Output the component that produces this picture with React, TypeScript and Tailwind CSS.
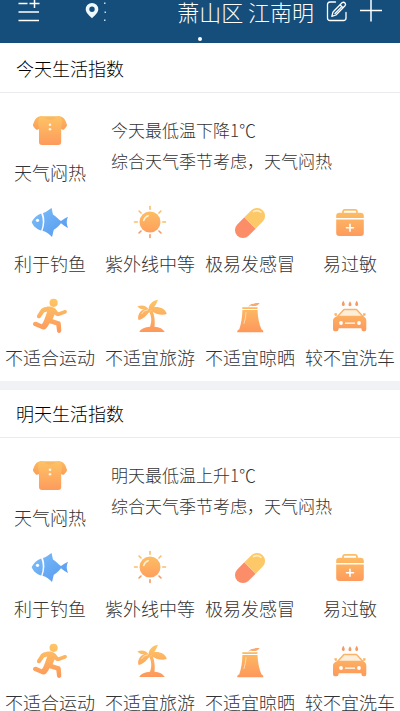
import type { ReactNode } from "react";

type IndexItem = { label: string; icon: ReactNode };

function Art({ children }: { children: ReactNode }) {
  return (
    <svg viewBox="0 0 48 48" className="size-12" fill="url(#warm)" aria-hidden="true">
      {children}
    </svg>
  );
}

function Gradients() {
  return (
    <svg className="absolute size-0" aria-hidden="true">
      <defs>
        <linearGradient id="warm" gradientUnits="userSpaceOnUse" x1="24" y1="8" x2="24" y2="40">
          <stop offset="0" stopColor="#fdc565" />
          <stop offset="1" stopColor="#fd985c" />
        </linearGradient>
        <linearGradient id="sleeve" gradientUnits="userSpaceOnUse" x1="24" y1="9" x2="24" y2="26">
          <stop offset="0" stopColor="#fabb62" />
          <stop offset="1" stopColor="#fa9855" />
        </linearGradient>
        <linearGradient id="cool" gradientUnits="userSpaceOnUse" x1="12" y1="10" x2="36" y2="38">
          <stop offset="0" stopColor="#7bbcf8" />
          <stop offset="1" stopColor="#569bf0" />
        </linearGradient>
      </defs>
    </svg>
  );
}

const Shirt = () => (
  <Art>
    <path fill="url(#sleeve)" d="M14.500 9.300C11.500 9.300 9.500 11.500 8.400 14L6.900 17.700C6.600 18.800 8.500 21.200 10 22.400C10.900 23.100 12 22.700 13.500 21.500H34.500C36 22.700 37.100 23.100 38 22.400C39.500 21.200 41.300 18.800 41 17.700L39.600 14C38.500 11.500 36.500 9.300 33.500 9.300Z" />
    <path d="M14.500 9.300C16.500 9 17.800 9.700 19 10.800C21.800 13.300 26.200 13.300 29 10.800C30.200 9.700 31.500 9 33.500 9.300C35.500 10.500 36.200 13.500 35.800 17C35.300 19.500 35.200 22 35.200 24V35Q35.200 38 32.200 38H16Q13 38 13 35V24C13 22 12.800 19.500 12.200 17C11.800 13.500 12.500 10.500 14.500 9.300Z" />
    <circle cx="24" cy="17.800" r="1.300" fill="#fff3e2" />
    <circle cx="24" cy="22.300" r="1.300" fill="#fff3e2" />
  </Art>
);

const Fish = () => (
  <Art>
    <g fill="url(#cool)">
      <path d="M15.200 15.500C10.500 17 7.500 20.500 5.700 24C7 28 10.500 31.300 15.200 32.500C17.300 27 17.300 20.500 15.200 15.500Z" />
      <path d="M17 15C20 14.300 22.500 12 25.500 10C26.300 12.500 26.400 14.500 27 16.500C30.500 18.500 32.500 21.500 35 23C37 21.500 39.300 20 42 18.800C40.300 22.500 40.300 26 42 30C39.300 28.500 37 27 35 25.300C32.800 28 30.500 30.300 27.800 31.800C27 34.500 26.800 37 26 39C23.500 36 20.500 34 16.500 32.800C18.800 27 19 20.500 17 15Z" />
    </g>
    <circle cx="11.500" cy="22.300" r="1.600" fill="#fff" />
  </Art>
);

const RAYS = [0, 45, 90, 135, 180, 225, 270, 315];

const Sun = () => (
  <Art>
    <circle cx="24" cy="24" r="10.500" />
    <path d="M17.700 22.500Q18.700 18.800 22.200 17.700" fill="none" stroke="#fff3d6" strokeWidth="1.500" strokeLinecap="round" />
    {RAYS.map((angle) => (
      <path
        key={angle}
        d="M24 8.500V11.300"
        transform={`rotate(${angle} 24 24)`}
        stroke={angle > 90 && angle < 270 ? "#f29a66" : "#f9bd6c"}
        strokeWidth="1.600"
        strokeLinecap="round"
      />
    ))}
  </Art>
);

const Pill = () => (
  <Art>
    <g transform="rotate(-45 24 25)">
      <path fill="#fb8d68" d="M24 17H14A8 8 0 0 0 14 33H24Z" />
      <path fill="#fdc968" d="M24 17H34A8 8 0 0 1 34 33H24Z" />
      <path d="M34.500 19.500Q39 20.500 39.300 25" fill="none" stroke="#ffedbd" strokeWidth="1.600" strokeLinecap="round" />
    </g>
  </Art>
);

const MedKit = () => (
  <Art>
    <path d="M17 15.500V14Q17 11.800 19 11.800H29Q31 11.800 31 14V15.500" fill="none" stroke="#fbbd68" strokeWidth="1.700" />
    <path d="M13.500 14.800H34.500Q37.800 14.800 37.800 18V20H10.200V18Q10.200 14.800 13.500 14.800Z" />
    <path d="M10.200 21.500H37.800V35Q37.800 38 34.800 38H13.200Q10.200 38 10.200 35Z" />
    <path d="M24 26.200V33.200M20.500 29.700H27.500" stroke="#fff" strokeWidth="1.600" strokeLinecap="round" />
  </Art>
);

const Runner = () => (
  <Art>
    <circle cx="27.600" cy="10.800" r="4.100" />
    <path d="M20 15C23 14.200 26.500 14.600 28.800 16.200C30.600 17.600 31.200 19.400 32.500 20.200L38.500 18C40.800 17.400 42 20.200 39.800 21.500L33 24C30.800 24.500 29.600 23.300 28.700 22.200L26.600 27.300L33 29.300C34.200 29.700 34.700 30.400 34.800 31.500L35.300 38.500C35.300 41.400 31.500 41.800 31 39L30.300 33.200L23.500 31.300C22.500 33.500 21.300 35.500 19.800 36.700C18.800 37.600 17.500 37.600 16.300 37.200L8.500 34C5.700 32.600 7.300 28.900 10.200 29.800L15.800 32.200C17.500 30.500 18.200 27.800 19.200 25.200L21.200 19.600L18 20.400L14.600 25.400C13 27.500 9.900 25.700 11.200 23.300L15 17.300C16 16 18 15.400 20 15Z" />
  </Art>
);

const Palm = () => (
  <Art>
    <path d="M13.300 39.900C15 36.800 19 35.200 24 34.800C26 29.500 25.600 24 23 19.500L26.500 18.500C28.500 23.500 29.200 29.500 28.500 34.800C33.500 35.200 37 37 38.800 39.900Z" />
    <path d="M22.500 17.500C23 12 26.500 8.500 32 7.700C30.800 10.500 30.200 12.500 28.200 15C34.500 14.500 39.500 17 40.800 22C36 23.500 29.500 22.500 25 18.500C21 22 18.500 27 12.500 28C11 23.500 14 18.500 19 16.800C16 17.700 13.500 16.800 11.300 14.600C15.500 12.600 20.500 13.500 22.500 17.500Z" />
    <path d="M22 17.800Q17.500 18 15.500 22" fill="none" stroke="#fff3df" strokeWidth="0.700" />
  </Art>
);

const Tower = () => (
  <Art>
    <path d="M16.300 15.200H31.500V17H16.300Z" />
    <path d="M16.400 18H31.500C31.800 25 33 32 35.500 37.500C36.700 37.800 37.200 38.500 37.300 40.200H11.200C11.300 38.500 11.900 37.800 13.200 37.500C15.300 32 16.200 25 16.400 18Z" />
    <path d="M22.300 15C23.500 11.800 27.500 11 33.700 11C31 14.600 27.500 14.500 24.500 13.500Z" fill="#f9a86e" />
    <path d="M20 20.500Q19.800 26.500 18 31.500" fill="none" stroke="#ffdfb4" strokeWidth="0.900" strokeLinecap="round" />
  </Art>
);

const CarWash = () => (
  <Art>
    <path
      fill="#f39a66"
      d="M17.300 8.800C18.500 10.700 19.100 12 18.600 13.200C18.100 14.300 16.500 14.300 16 13.200C15.500 12 16.100 10.700 17.300 8.800ZM24 9.300C25.200 11 25.800 12.200 25.300 13.400C24.800 14.500 23.200 14.500 22.700 13.400C22.200 12.200 22.800 11 24 9.300ZM30.700 8.800C31.900 10.700 32.500 12 32 13.200C31.500 14.300 29.900 14.300 29.400 13.200C28.900 12 29.500 10.700 30.700 8.800Z"
    />
    <path d="M18 17.600H30.500L37 24.500H11.500Z" fill="#fdeed9" stroke="#fbb269" strokeWidth="1.500" strokeLinejoin="round" />
    <path d="M8.500 21.200H11L10.600 24.200Q7.800 23.500 8.500 21.200ZM39.500 21.200H37L37.400 24.200Q40.200 23.500 39.500 21.200Z" />
    <path d="M11 24.300H37Q40.300 25.500 40.300 28.500V37Q40.300 39.200 38.500 39.200H37.200Q35.700 39.200 35.500 37.500L35.300 36.300H12.700L12.500 37.500Q12.300 39.200 10.800 39.200H8.800Q7 39.200 7 37V28.500Q7.200 25.500 11 24.300Z" />
    <circle cx="15" cy="31" r="1.900" fill="#fff" />
    <circle cx="33" cy="31" r="1.900" fill="#fff" />
    <path d="M19.500 31.200H28.500" stroke="#fff" strokeWidth="1.300" strokeLinecap="round" />
  </Art>
);

const INDEXES: IndexItem[] = [
  { label: "利于钓鱼", icon: <Fish /> },
  { label: "紫外线中等", icon: <Sun /> },
  { label: "极易发感冒", icon: <Pill /> },
  { label: "易过敏", icon: <MedKit /> },
  { label: "不适合运动", icon: <Runner /> },
  { label: "不适宜旅游", icon: <Palm /> },
  { label: "不适宜晾晒", icon: <Tower /> },
  { label: "较不宜洗车", icon: <CarWash /> },
];

function Cell({ label, icon }: IndexItem) {
  return (
    <div className="flex flex-col items-center gap-1.5">
      {icon}
      <span className="text-[18px] leading-[22px] whitespace-nowrap">{label}</span>
    </div>
  );
}

function LifeIndex({ title, change }: { title: string; change: string }) {
  return (
    <section className="bg-white">
      <h2 className="h-12 border-b border-[#ebebed] px-4 text-[18px] leading-[46px] font-light text-black">{title}</h2>
      <div className="pt-3.5 pb-[13px] font-light text-[#333]">
        <div className="grid grid-cols-4">
          <Cell label="天气闷热" icon={<Shirt />} />
          <div className="col-span-3 pt-[7px] pl-[11px] text-[17px] leading-[31px]">
            <p>{change}</p>
            <p>综合天气季节考虑，天气闷热</p>
          </div>
        </div>
        <div className="mt-[15px] grid grid-cols-4 gap-y-[18px]">
          {INDEXES.map((item) => (
            <Cell key={item.label} {...item} />
          ))}
        </div>
      </div>
    </section>
  );
}

function Header() {
  return (
    <header className="flex h-[43px] flex-col items-center justify-between bg-[#154e7b] pb-0.5 text-white">
      <div className="flex w-full items-start px-[18px]">
        <button type="button" aria-label="城市列表" className="h-6 w-[22px]">
          <svg viewBox="0 0 22 24" className="h-6 w-[22px]" fill="none" stroke="currentColor" strokeWidth="1.500">
            <path d="M0.500 3.500H9.500M11.500 3.500H21.500M16.500 -1V8M0.500 12H21M0.500 20.500H21" />
          </svg>
        </button>
        <div className="ml-[45px] flex h-6 items-center gap-[5px]">
          <svg viewBox="0 0 14 24" className="h-6 w-3.5" fill="#eef8ff" aria-hidden="true">
            <path fillRule="evenodd" d="M7 3A6.300 6.300 0 0 1 13.300 9.300C13.300 13 9.500 15.500 7 18.300C4.500 15.500 0.700 13 0.700 9.300A6.300 6.300 0 0 1 7 3ZM7 6.600A2.700 2.700 0 1 0 7 12A2.700 2.700 0 1 0 7 6.600Z" />
          </svg>
          <svg viewBox="0 0 2 24" className="h-6 w-0.5" fill="#c5dded" aria-hidden="true">
            <path d="M0 2.500H1.500V4H0ZM0.500 11.500H2V13H0.500ZM0 19.500H1.500V21H0Z" />
          </svg>
        </div>
        <h1 className="ml-auto text-[22px] leading-[22px] font-light whitespace-nowrap">萧山区 江南明</h1>
        <button type="button" aria-label="编辑" className="ml-3 h-6 w-[22px]">
          <svg viewBox="0 0 22 24" className="h-6 w-[22px]" fill="none" stroke="currentColor" strokeWidth="1.300" strokeLinecap="round" strokeLinejoin="round">
            <path d="M9.500 2H4Q1.500 2 1.500 4.500V18Q1.500 20.500 4 20.500H17.500Q20 20.500 20 18V12.500" />
            <path d="M16 2.800Q17.500 1.500 19 3Q20.200 4.500 19 5.800L10 15L5.800 16.300L7 12ZM14 4.800L17 7.800M15.800 6.600L9 13.500" />
          </svg>
        </button>
        <button type="button" aria-label="添加" className="ml-3 h-6 w-[22px]">
          <svg viewBox="0 0 22 24" className="h-6 w-[22px]" stroke="currentColor" strokeWidth="1.500">
            <path d="M0 10.500H22M11 0V21.500" />
          </svg>
        </button>
      </div>
      <span className="size-1 rounded-full bg-white" />
    </header>
  );
}

export default function App() {
  return (
    <div className="min-h-screen bg-white font-['Noto_Sans_CJK_SC',sans-serif]">
      <Gradients />
      <Header />
      <main className="flex flex-col gap-[9px] bg-[#f1f2f5]">
        <div className="bg-white pt-0.5">
          <LifeIndex title="今天生活指数" change="今天最低温下降1℃" />
        </div>
        <LifeIndex title="明天生活指数" change="明天最低温上升1℃" />
      </main>
    </div>
  );
}
